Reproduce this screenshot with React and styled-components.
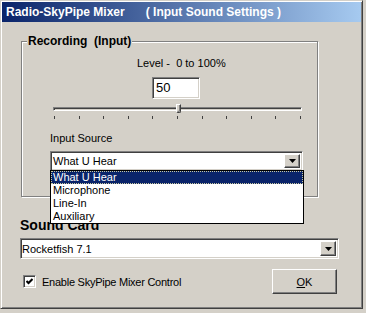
import React from "react";
import styled, { createGlobalStyle } from "styled-components";

const GlobalStyle = createGlobalStyle`
  html, body {
    margin: 0;
    padding: 0;
    background: #d4d0c8;
  }
  body {
    font-family: "Liberation Sans", Arial, sans-serif;
    font-size: 11px;
    color: #000;
  }
`;

const sunken = `
  border: 1px solid;
  border-color: #808080 #fff #fff #808080;
  box-shadow: inset 1px 1px #404040, inset -1px -1px #d4d0c8;
`;

const raised = `
  border: 1px solid;
  border-color: #fff #404040 #404040 #fff;
  box-shadow: inset -1px -1px #808080;
`;

const Window = styled.div`
  width: 363px;
  height: 309px;
  box-sizing: border-box;
  border: 1px solid;
  border-color: #d4d0c8 #404040 #404040 #d4d0c8;
  box-shadow: inset 1px 1px #fff, inset -1px -1px #808080;
  padding: 1px;
  display: flex;
  flex-direction: column;
  background: #d4d0c8;
`;

const TitleBar = styled.div`
  height: 20px;
  display: flex;
  align-items: center;
  gap: 21px;
  padding-left: 4px;
  background: linear-gradient(to right, #0a246a, #a6caf0);
  color: #fff;
  font-weight: bold;
  font-size: 12px;
  white-space: pre;
`;

const Body = styled.div`
  display: flex;
  flex-direction: column;
  padding: 0 22px 0 18px;
`;

const Group = styled.fieldset`
  margin: 12px 21px 0 1px;
  padding: 0 0 25px 0;
  border: 1px solid #808080;
  box-shadow: inset 1px 1px #fff, 1px 1px #fff;
  display: flex;
  flex-direction: column;
  align-items: flex-start;
  min-width: 0;
`;

const Legend = styled.legend`
  margin-left: 5px;
  padding: 0 1px;
  font-size: 12px;
  line-height: 14px;
  font-weight: bold;
  background: #d4d0c8;
  white-space: pre;
`;

const Label = styled.div`
  margin-left: ${(p) => p.$indent || 0}px;
  margin-top: ${(p) => p.$top || 0}px;
  line-height: 13px;
  white-space: pre;
`;

const TextBox = styled.div`
  ${sunken}
  margin: 7px 0 0 130px;
  width: 48px;
  height: 22px;
  box-sizing: border-box;
  padding: 0 3px;
  background: #fff;
  font-size: 13px;
  line-height: 20px;
`;

const Slider = styled.div`
  margin: 4px 0 0 31px;
  width: 249px;
  display: flex;
  flex-direction: column;
`;

const TrackRow = styled.div`
  position: relative;
  height: 11px;
  display: flex;
  align-items: center;
`;

const Track = styled.div`
  ${sunken}
  box-shadow: inset 1px 1px #404040;
  width: 100%;
  height: 4px;
  box-sizing: border-box;
`;

const Thumb = styled.div`
  ${raised}
  position: absolute;
  top: 1px;
  width: 5px;
  height: 9px;
  box-sizing: border-box;
  margin-left: -2px;
  background: #d4d0c8;
  border-radius: 0 0 2px 2px;
`;

const Ticks = styled.div`
  display: flex;
  justify-content: space-between;
  padding: 0 1px;
  margin-top: 2px;
`;

const Tick = styled.div`
  width: 1px;
  height: 3px;
  background: #404040;
`;

const Combo = styled.div`
  ${sunken}
  position: relative;
  margin-left: ${(p) => p.$indent || 0}px;
  margin-top: ${(p) => p.$top || 0}px;
  width: ${(p) => p.$width}px;
  height: ${(p) => p.$height}px;
  box-sizing: border-box;
  background: #fff;
  display: flex;
  align-items: center;
  padding: 2px 2px 2px ${(p) => p.$pad}px;
  font-size: 11px;
`;

const ComboText = styled.div`
  flex: 1;
  white-space: pre;
`;

const ArrowButton = styled.div`
  ${raised}
  width: 16px;
  height: 100%;
  box-sizing: border-box;
  background: #d4d0c8;
  display: flex;
  align-items: center;
  justify-content: center;
`;

const DropList = styled.div`
  position: absolute;
  left: -1px;
  top: 100%;
  width: 254px;
  box-sizing: border-box;
  border: 1px solid #000;
  background: #fff;
  display: flex;
  flex-direction: column;
  z-index: 2;
`;

const Item = styled.div`
  height: 13px;
  line-height: 13px;
  padding-left: 2px;
  box-sizing: border-box;
  color: ${(p) => (p.$active ? "#fff" : "#000")};
  background: ${(p) => (p.$active ? "#0a246a" : "#fff")};
  outline: ${(p) => (p.$active ? "1px dotted #c8c8a0" : "none")};
  outline-offset: -1px;
`;

const SectionTitle = styled.div`
  margin-top: 20px;
  font-size: 14px;
  line-height: 16px;
  font-weight: bold;
`;

const BottomRow = styled.div`
  margin-top: 10px;
  height: 25px;
  display: flex;
  align-items: center;
  justify-content: space-between;
  padding: 0 2px 0 3px;
`;

const CheckRow = styled.label`
  display: flex;
  align-items: center;
  gap: 6px;
  letter-spacing: -0.25px;
`;

const CheckBox = styled.div`
  ${sunken}
  width: 13px;
  height: 13px;
  box-sizing: border-box;
  background: #fff;
  display: flex;
  align-items: center;
  justify-content: center;
`;

const Button = styled.div`
  ${raised}
  width: 65px;
  height: 25px;
  box-sizing: border-box;
  display: flex;
  align-items: center;
  justify-content: center;
  background: #d4d0c8;
`;

const DownArrow = () => (
  <svg width="7" height="4" viewBox="0 0 7 4">
    <polygon points="0,0 7,0 3.5,4" fill="#000" />
  </svg>
);

const sources = ["What U Hear", "Microphone", "Line-In", "Auxiliary"];

export default function App() {
  const level = 50;
  return (
    <>
      <GlobalStyle />
      <Window>
        <TitleBar>
          <span>Radio-SkyPipe Mixer</span>
          <span>( Input Sound Settings )</span>
        </TitleBar>
        <Body>
          <Group>
            <Legend>Recording  (Input)</Legend>
            <Label $indent={115} $top={9}>Level -  0 to 100%</Label>
            <TextBox>{level}</TextBox>
            <Slider>
              <TrackRow>
                <Track />
                <Thumb style={{ left: `${level}%` }} />
              </TrackRow>
              <Ticks>
                {Array.from({ length: 11 }).map((_, i) => (
                  <Tick key={i} />
                ))}
              </Ticks>
            </Slider>
            <Label $indent={28} $top={13}>Input Source</Label>
            <Combo $indent={28} $top={6} $width={253} $height={20} $pad={2}>
              <ComboText>What U Hear</ComboText>
              <ArrowButton>
                <DownArrow />
              </ArrowButton>
              <DropList>
                {sources.map((s, i) => (
                  <Item key={s} $active={i === 0}>
                    {s}
                  </Item>
                ))}
              </DropList>
            </Combo>
          </Group>
          <SectionTitle>Sound Card</SectionTitle>
          <Combo $top={5} $width={319} $height={21} $pad={1}>
            <ComboText>Rocketfish 7.1</ComboText>
            <ArrowButton>
              <DownArrow />
            </ArrowButton>
          </Combo>
          <BottomRow>
            <CheckRow>
              <CheckBox>
                <svg width="7" height="7" viewBox="0 0 7 7">
                  <polyline points="0.5,3 2.5,5 6.5,1" fill="none" stroke="#000" strokeWidth="2" />
                </svg>
              </CheckBox>
              <span>Enable SkyPipe Mixer Control</span>
            </CheckRow>
            <Button>
              <span>
                <u>O</u>K
              </span>
            </Button>
          </BottomRow>
        </Body>
      </Window>
    </>
  );
}
